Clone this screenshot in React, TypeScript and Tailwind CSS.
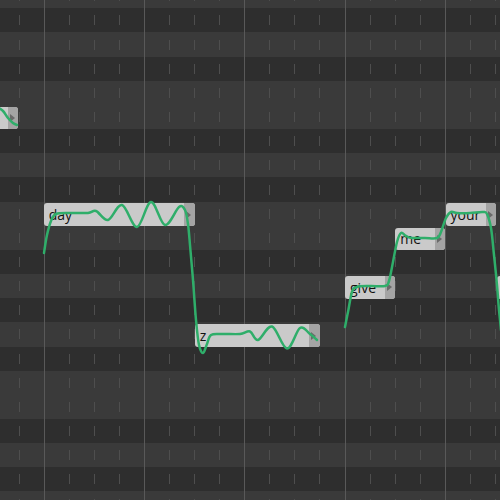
const ROW_H = 24.17;
const TOP = 8.33;

// piano key shading, row -1 .. 20 (true = white key)
const whiteKeys = [true, false, true, false, true, true, false, true, false, true, true, false, true, false, true, false, true, true, false, true, false, true];

interface Note {
  left: number;
  width: number;
  row: number;
  lyric: string;
}

const notes: Note[] = [
  { left: -40, width: 58.3, row: 4, lyric: '' },
  { left: 43.7, width: 151.3, row: 8, lyric: 'day' },
  { left: 194.7, width: 125.3, row: 13, lyric: 'z' },
  { left: 345, width: 50.3, row: 11, lyric: 'give' },
  { left: 395.3, width: 49.8, row: 9, lyric: 'me' },
  { left: 445.5, width: 50.5, row: 8, lyric: 'your' },
  { left: 496.5, width: 60, row: 11, lyric: '' },
];

const curves: [number, number][][] = [
  [[-3, 107], [3, 111], [8, 118], [13, 123], [17, 125]],
  [
    [44, 253], [47, 235], [51, 221], [56, 214], [70, 213], [88, 213], [96, 211], [108, 220],
    [122, 205], [137, 227], [151, 202], [165, 225], [179, 207], [185, 210], [188, 224],
    [190, 245], [193, 280], [196, 320], [199, 345], [203, 353], [207, 344], [211, 335],
    [222, 334], [240, 334], [250, 331.5], [258, 340], [272, 326.5], [287, 348.5], [300, 328],
    [310, 334], [317, 340],
  ],
  [
    [345, 327], [348, 312], [352, 292], [357, 287], [370, 286], [385, 286], [389, 281],
    [393, 262], [397, 242], [401, 233], [406, 236], [412, 238], [425, 238], [437, 238],
    [441, 232], [446, 218], [451, 212], [457, 213], [470, 213], [483, 212], [487, 214],
    [491, 228], [494, 255], [497, 285], [499, 310], [501, 330],
  ],
];

function smoothPath(pts: [number, number][]) {
  let d = `M${pts[0][0]} ${pts[0][1]}`;
  for (let i = 0; i < pts.length - 1; i++) {
    const p0 = pts[i - 1] ?? pts[i];
    const p1 = pts[i];
    const p2 = pts[i + 1];
    const p3 = pts[i + 2] ?? p2;
    const c1x = p1[0] + (p2[0] - p0[0]) / 6;
    const c1y = p1[1] + (p2[1] - p0[1]) / 6;
    const c2x = p2[0] - (p3[0] - p1[0]) / 6;
    const c2y = p2[1] - (p3[1] - p1[1]) / 6;
    d += ` C${c1x.toFixed(1)} ${c1y.toFixed(1)} ${c2x.toFixed(1)} ${c2y.toFixed(1)} ${p2[0]} ${p2[1]}`;
  }
  return d;
}

function GridRow({ white }: { white: boolean }) {
  return (
    <div className={`flex h-[24.17px] shrink-0 items-center pl-[18.5px] ${white ? 'bg-[#3a3a3a]' : 'bg-[#2e2e2e]'}`}>
      {Array.from({ length: 20 }).map((_, i) => (
        <div key={i} className="w-[25.08px] shrink-0">
          <div className="h-[10px] w-px bg-[#4e4e4e]" />
        </div>
      ))}
    </div>
  );
}

function NoteBlock({ note }: { note: Note }) {
  return (
    <div
      className="absolute flex h-[22.5px] overflow-hidden rounded-[3px] bg-[#cacaca]"
      style={{ left: note.left, width: note.width, top: TOP + note.row * ROW_H + 1.8 }}
    >
      <div className="flex flex-1 items-center pl-[5px] pt-px text-[14px] leading-none text-[#111111] [font-family:'Open_Sans',sans-serif]">
        {note.lyric}
      </div>
      <div className="flex w-[10.5px] shrink-0 items-center bg-[#a4a4a4] pl-[2px]">
        <div className="h-0 w-0 border-y-[4px] border-l-[5px] border-y-transparent border-l-[#6a6a6a]" />
      </div>
    </div>
  );
}

export default function App() {
  return (
    <div className="relative h-[500px] w-[500px] overflow-hidden bg-[#3a3a3a]">
      <div className="mt-[-15.84px] flex flex-col">
        {whiteKeys.map((w, i) => (
          <GridRow key={i} white={w} />
        ))}
      </div>

      {/* bar lines */}
      <div className="absolute inset-0 flex pl-[43.7px]">
        {Array.from({ length: 5 }).map((_, i) => (
          <div key={i} className="h-full w-[100.3px] shrink-0 border-l border-[#595959]" />
        ))}
      </div>

      {notes.map((n, i) => (
        <NoteBlock key={i} note={n} />
      ))}

      <svg className="pointer-events-none absolute inset-0" width="500" height="500" viewBox="0 0 500 500">
        {curves.map((c, i) => (
          <path key={i} d={smoothPath(c)} fill="none" stroke="#2fae6a" strokeWidth="2.5" strokeLinecap="round" strokeLinejoin="round" />
        ))}
      </svg>
    </div>
  );
}
